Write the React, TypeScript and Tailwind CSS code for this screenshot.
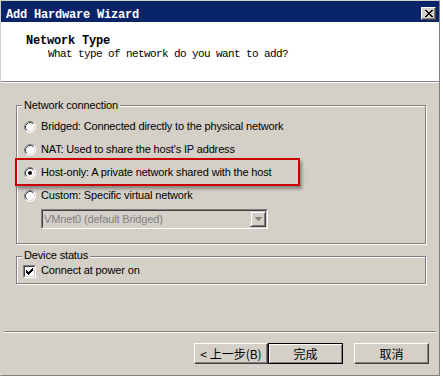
const sans = "font-['Liberation_Sans',Arial,sans-serif] text-[11px] leading-[13px] tracking-[-0.15px] text-black";
const mono = "font-['Liberation_Mono','Courier_New',monospace]";

function Radio({ checked }: { checked?: boolean }) {
  return (
    <svg width="12" height="12" viewBox="0 0 12 12" className="shrink-0">
      <circle cx="6" cy="6" r="5.5" fill="#fff" />
      <path d="M2.11 9.89 A5.5 5.5 0 0 1 9.89 2.11" stroke="#808080" fill="none" />
      <path d="M9.89 2.11 A5.5 5.5 0 0 1 2.11 9.89" stroke="#fff" fill="none" />
      <path d="M2.82 9.18 A4.5 4.5 0 0 1 9.18 2.82" stroke="#404040" fill="none" />
      <path d="M9.18 2.82 A4.5 4.5 0 0 1 2.82 9.18" stroke="#d4d0c8" fill="none" />
      {checked && <circle cx="6" cy="6" r="2" fill="#000" />}
    </svg>
  );
}

function Checkbox() {
  // classic 7x7 tick, one 1x3 column per x
  const cols = [3, 4, 5, 4, 3, 2, 1];
  return (
    <span className="flex h-[13px] w-[13px] shrink-0 border border-t-[#808080] border-l-[#808080] border-r-white border-b-white">
      <span className="flex flex-1 items-center justify-center border border-t-[#404040] border-l-[#404040] border-r-[#d4d0c8] border-b-[#d4d0c8] bg-white">
        <svg width="7" height="7" viewBox="0 0 7 7" shapeRendering="crispEdges">
          {cols.map((y, x) => (
            <rect key={x} x={x} y={y - 1} width="1" height="3" fill="#000" />
          ))}
        </svg>
      </span>
    </span>
  );
}

function Option({ label, checked }: { label: string; checked?: boolean }) {
  return (
    <div className="flex h-[23px] items-center gap-[5px]">
      <Radio checked={checked} />
      <span>{label}</span>
    </div>
  );
}

function Button({ children, def, w = "w-[75px]" }: { children: React.ReactNode; def?: boolean; w?: string }) {
  return (
    <button
      className={
        def
          ? `${w} h-[21px] border border-black bg-[#d4d0c8] shadow-[inset_1px_1px_0_#fff,inset_-1px_-1px_0_#808080] font-['Noto_Sans_CJK_SC',sans-serif] text-[12px] leading-[14px] tracking-normal`
          : `${w} h-[21px] border border-t-white border-l-white border-r-[#404040] border-b-[#404040] bg-[#d4d0c8] shadow-[inset_-1px_-1px_0_#808080] font-['Noto_Sans_CJK_SC',sans-serif] text-[12px] leading-[14px] tracking-normal`
      }
    >
      {children}
    </button>
  );
}

export default function App() {
  return (
    <div className="h-[378px] w-[443px] bg-white">
      <div className="flex h-[376px] w-[440px] flex-col border border-t-[#d4d0c8] border-l-[#d4d0c8] border-r-[#808080] border-b-[#808080] bg-[#d4d0c8]">
        {/* caption */}
        <div className="flex h-[21px] items-start justify-between bg-[#0a246a] pl-[5px] pr-[3px]">
          <span className={`${mono} pt-[7px] text-[12px] leading-[14px] font-bold tracking-[-0.2px] text-white`}>
            Add Hardware Wizard
          </span>
          <span className="mt-[6px] flex h-[13px] w-[15px] items-center justify-center border border-t-white border-l-white border-r-[#404040] border-b-[#404040] bg-[#d4d0c8] shadow-[inset_-1px_-1px_0_#808080]">
            <svg width="8" height="7" viewBox="0 0 8 7" shapeRendering="crispEdges">
              <path d="M0 0h2v1H0zM6 0h2v1H6zM1 1h2v1H1zM5 1h2v1H5zM2 2h4v1H2zM3 3h2v1H3zM2 4h4v1H2zM1 5h2v1H1zM5 5h2v1H5zM0 6h2v1H0zM6 6h2v1H6z" fill="#000" />
            </svg>
          </span>
        </div>

        {/* header */}
        <div className={`${mono} h-[60px] border-b border-[#808080] bg-white pt-[12px] text-black`}>
          <div className="pl-[25px] text-[12px] leading-[14px] font-bold tracking-[-0.2px]">Network Type</div>
          <div className="pl-[47px] text-[11px] leading-[13px] tracking-[-0.6px]">
            What type of network do you want to add?
          </div>
        </div>

        {/* body */}
        <div className={`${sans} flex flex-1 flex-col border-t border-white`}>
          <div className="relative ml-[15px] mt-[22px] h-[139px] w-[410px] border border-[#808080] pl-[7px] pt-[9px] shadow-[1px_1px_0_#fff,inset_1px_1px_0_#fff]">
            <span className="absolute -top-[7px] left-[5px] bg-[#d4d0c8] px-[2px]">Network connection</span>
            <Option label="Bridged: Connected directly to the physical network" />
            <Option label="NAT: Used to share the host's IP address" />
            <Option label="Host-only: A private network shared with the host" checked />
            <Option label="Custom: Specific virtual network" />
            <div className="ml-[17px] mt-[2px] flex h-[20px] w-[227px] border border-t-[#808080] border-l-[#808080] border-r-white border-b-white">
              <div className="flex flex-1 items-center border border-t-[#404040] border-l-[#404040] border-r-[#d4d0c8] border-b-[#d4d0c8] pl-[1px]">
                <span className="flex-1 text-[#808080]">VMnet0 (default Bridged)</span>
                <span className="flex h-[16px] w-[16px] items-center justify-center border border-t-[#d4d0c8] border-l-[#d4d0c8] border-r-[#404040] border-b-[#404040] shadow-[inset_1px_1px_0_#fff,inset_-1px_-1px_0_#808080]">
                  <svg width="7" height="4" viewBox="0 0 7 4" shapeRendering="crispEdges">
                    <path d="M0 0h7v1H0zM1 1h5v1H1zM2 2h3v1H2zM3 3h1v1H3z" fill="#808080" />
                  </svg>
                </span>
              </div>
            </div>
            <div className="absolute left-[-2px] top-[52px] h-[28px] w-[285px] border-2 border-[#c80000] shadow-[2px_3px_3px_rgba(0,0,0,0.35)]" />
          </div>

          <div className="relative ml-[15px] mt-[12px] flex h-[28px] w-[410px] items-start gap-[5px] border border-[#808080] pl-[6px] pt-[8px] shadow-[1px_1px_0_#fff,inset_1px_1px_0_#fff]">
            <span className="absolute -top-[8px] left-[5px] bg-[#d4d0c8] px-[2px]">Device status</span>
            <Checkbox />
            <span className="-mt-[1px]">Connect at power on</span>
          </div>

          <div className="mx-[3px] mt-[47px] h-[2px] border-t border-b border-t-[#808080] border-b-white" />

          <div className="mt-[10px] flex justify-end pr-[10px]">
            <Button w="w-[74px]">&lt;&nbsp;上一步(B)</Button>
            <Button def>完成</Button>
            <div className="w-[11px]" />
            <Button>取消</Button>
          </div>
        </div>
      </div>
    </div>
  );
}
